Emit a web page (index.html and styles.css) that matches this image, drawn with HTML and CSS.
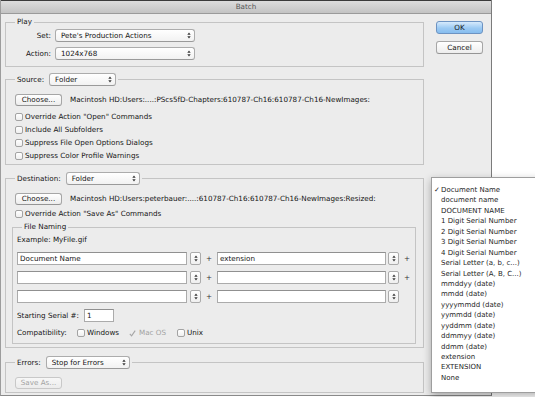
FILE: index.html
```html
<!DOCTYPE html>
<html>
<head>
<meta charset="utf-8">
<title>Batch</title>
<link rel="stylesheet" href="styles.css">
</head>
<body>
<div class="dialog">
  <div class="titlebar">Batch</div>
  <div class="content">
    <div class="main">
      <section class="group play">
        <div class="legend">Play</div>
        <div class="play-row first"><span class="lbl">Set:</span><div class="select w-set"><span>Pete's Production Actions</span><svg class="arr" width="4" height="7" viewBox="0 0 4 7"><path d="M0.3 2.8L2 0.6L3.7 2.8ZM0.3 4.2L2 6.4L3.7 4.2Z"/></svg></div></div>
        <div class="play-row"><span class="lbl">Action:</span><div class="select w-set"><span>1024x768</span><svg class="arr" width="4" height="7" viewBox="0 0 4 7"><path d="M0.3 2.8L2 0.6L3.7 2.8ZM0.3 4.2L2 6.4L3.7 4.2Z"/></svg></div></div>
      </section>

      <section class="group source">
        <div class="legend ctl"><span>Source:</span><div class="select w-src"><span>Folder</span><svg class="arr" width="4" height="7" viewBox="0 0 4 7"><path d="M0.3 2.8L2 0.6L3.7 2.8ZM0.3 4.2L2 6.4L3.7 4.2Z"/></svg></div></div>
        <div class="choose-row"><span class="btn choose">Choose...</span><span class="path">Macintosh HD:Users:....:PScs5fD-Chapters:610787-Ch16:610787-Ch16-NewImages:</span></div>
        <div class="checks">
          <div class="check"><span class="box"></span>Override Action "Open" Commands</div>
          <div class="check"><span class="box"></span>Include All Subfolders</div>
          <div class="check"><span class="box"></span>Suppress File Open Options Dialogs</div>
          <div class="check"><span class="box"></span>Suppress Color Profile Warnings</div>
        </div>
      </section>

      <section class="group dest">
        <div class="legend ctl"><span>Destination:</span><div class="select w-dst"><span>Folder</span><svg class="arr" width="4" height="7" viewBox="0 0 4 7"><path d="M0.3 2.8L2 0.6L3.7 2.8ZM0.3 4.2L2 6.4L3.7 4.2Z"/></svg></div></div>
        <div class="choose-row"><span class="btn choose">Choose...</span><span class="path">Macintosh HD:Users:peterbauer:....:610787-Ch16:610787-Ch16-NewImages:Resized:</span></div>
        <div class="check override"><span class="box"></span>Override Action "Save As" Commands</div>

        <section class="naming">
          <div class="legend">File Naming</div>
          <div class="example">Example: MyFile.gif</div>
          <div class="name-row first">
            <div class="field f1">Document Name</div>
            <span class="stepper"><svg width="4" height="7" viewBox="0 0 4 7"><path d="M0.3 2.8L2 0.6L3.7 2.8ZM0.3 4.2L2 6.4L3.7 4.2Z"/></svg></span>
            <span class="plus">+</span>
            <div class="field f2">extension</div>
            <span class="stepper s2"><svg width="4" height="7" viewBox="0 0 4 7"><path d="M0.3 2.8L2 0.6L3.7 2.8ZM0.3 4.2L2 6.4L3.7 4.2Z"/></svg></span>
            <span class="plus">+</span>
          </div>
          <div class="name-row">
            <div class="field f1"></div>
            <span class="stepper"><svg width="4" height="7" viewBox="0 0 4 7"><path d="M0.3 2.8L2 0.6L3.7 2.8ZM0.3 4.2L2 6.4L3.7 4.2Z"/></svg></span>
            <span class="plus">+</span>
            <div class="field f2"></div>
            <span class="stepper s2"><svg width="4" height="7" viewBox="0 0 4 7"><path d="M0.3 2.8L2 0.6L3.7 2.8ZM0.3 4.2L2 6.4L3.7 4.2Z"/></svg></span>
            <span class="plus">+</span>
          </div>
          <div class="name-row">
            <div class="field f1"></div>
            <span class="stepper"><svg width="4" height="7" viewBox="0 0 4 7"><path d="M0.3 2.8L2 0.6L3.7 2.8ZM0.3 4.2L2 6.4L3.7 4.2Z"/></svg></span>
            <span class="plus">+</span>
            <div class="field f2"></div>
            <span class="stepper s2"><svg width="4" height="7" viewBox="0 0 4 7"><path d="M0.3 2.8L2 0.6L3.7 2.8ZM0.3 4.2L2 6.4L3.7 4.2Z"/></svg></span>
          </div>
          <div class="serial-row">
            <span class="serial-lbl">Starting Serial #:</span>
            <div class="field serial">1</div>
          </div>
          <div class="compat-row">
            <span class="compat-lbl">Compatibility:</span>
            <span class="opt opt-win"><span class="box"></span>Windows</span>
            <span class="opt opt-mac"><svg class="tick" width="7" height="7" viewBox="0 0 7 7"><path d="M0.8 3.8L2.6 5.8L6.2 0.6" fill="none" stroke="#a6a6a6" stroke-width="1.1"/></svg>Mac OS</span>
            <span class="opt"><span class="box"></span>Unix</span>
          </div>
        </section>
      </section>

      <section class="group errors">
        <div class="legend ctl"><span>Errors:</span><div class="select w-err"><span>Stop for Errors</span><svg class="arr" width="4" height="7" viewBox="0 0 4 7"><path d="M0.3 2.8L2 0.6L3.7 2.8ZM0.3 4.2L2 6.4L3.7 4.2Z"/></svg></div></div>
        <span class="btn saveas">Save As...</span>
      </section>
    </div>
    <div class="side">
      <span class="btn primary">OK</span>
      <span class="btn cancel">Cancel</span>
    </div>
  </div>
</div>

<ul class="menu">
  <li><span class="mark">✓</span>Document Name</li>
  <li><span class="mark"></span>document name</li>
  <li><span class="mark"></span>DOCUMENT NAME</li>
  <li><span class="mark"></span>1 Digit Serial Number</li>
  <li><span class="mark"></span>2 Digit Serial Number</li>
  <li><span class="mark"></span>3 Digit Serial Number</li>
  <li><span class="mark"></span>4 Digit Serial Number</li>
  <li><span class="mark"></span>Serial Letter (a, b, c...)</li>
  <li><span class="mark"></span>Serial Letter (A, B, C...)</li>
  <li><span class="mark"></span>mmddyy (date)</li>
  <li><span class="mark"></span>mmdd (date)</li>
  <li><span class="mark"></span>yyyymmdd (date)</li>
  <li><span class="mark"></span>yymmdd (date)</li>
  <li><span class="mark"></span>yyddmm (date)</li>
  <li><span class="mark"></span>ddmmyy (date)</li>
  <li><span class="mark"></span>ddmm (date)</li>
  <li><span class="mark"></span>extension</li>
  <li><span class="mark"></span>EXTENSION</li>
  <li><span class="mark"></span>None</li>
</ul>
</body>
</html>
```

FILE: styles.css
```css
* { box-sizing: border-box; }
html, body { margin: 0; padding: 0; }
body {
  width: 535px;
  height: 397px;
  background: #fff;
  font-family: "DejaVu Sans", "Liberation Sans", sans-serif;
  font-size: 7px;
  line-height: 10px;
  color: #141414;
  position: relative;
  overflow: hidden;
}

.dialog {
  width: 492px;
  height: 396px;
  background: #ececec;
  border-left: 1px solid #9c9c9c;
  border-right: 1px solid #7b7b7b;
  border-bottom: 1px solid #8a8a8a;
  display: flex;
  flex-direction: column;
  font-size: 7.2px;
}

.titlebar {
  height: 14px;
  flex: none;
  border-top: 1px solid #3a3a3a;
  border-bottom: 1px solid #9a9a9a;
  background: linear-gradient(#dcdcdc, #c3c3c3);
  text-align: center;
  line-height: 12px;
  color: #555;
}

.content { display: flex; }
.main { width: 423px; padding-left: 4px; flex: none; }
.side { padding: 7px 0 0 12px; display: flex; flex-direction: column; }

.group {
  border: 1px solid #c4c4c4;
  padding: 0 6px 0 9px;
}
.legend {
  width: max-content;
  height: 10px;
  margin-top: -6px;
  padding: 0 2px;
  background: #ececec;
}
.legend.ctl {
  display: flex;
  align-items: center;
  gap: 5px;
  height: 13px;
  margin-top: -7px;
}

.play { margin-top: 8px; padding-bottom: 6px; }
.play-row { display: flex; align-items: center; height: 13px; margin-top: 5px; }
.play-row.first { margin-top: 2px; }
.lbl { width: 36px; text-align: right; margin-right: 4px; }

.select {
  display: flex;
  align-items: center;
  justify-content: space-between;
  height: 13px;
  border: 1px solid #acacac;
  border-bottom-color: #9a9a9a;
  border-radius: 3px;
  background: linear-gradient(#ffffff, #f2f2f2);
  padding: 0 3px 0 5px;
  line-height: 11px;
  color: #141414;
}
.arr { fill: #3a3a3a; flex: none; }
.w-set { width: 140px; }
.w-src { width: 67px; }
.w-dst { width: 74px; }
.w-err { width: 84px; }

.btn {
  display: inline-block;
  width: 47px;
  height: 12px;
  border: 1px solid #a6a6a6;
  border-bottom-color: #959595;
  border-radius: 3px;
  background: linear-gradient(#ffffff, #ededed);
  text-align: center;
  line-height: 10px;
  color: #141414;
  flex: none;
}
.choose { margin-right: 8px; }
.saveas {
  display: block;
  margin-top: 8px;
  color: #a3a3a3;
  border-color: #c8c8c8;
  background: linear-gradient(#f7f7f7, #ececec);
}
.primary {
  height: 13px;
  line-height: 11px;
  border-color: #6d93c2;
  background: linear-gradient(#d6eafc, #9ccaf3 55%, #86bdef);
}
.cancel { height: 13px; line-height: 11px; margin-top: 7px; }

.choose-row { display: flex; align-items: center; height: 12px; margin-top: 8px; }
.path { white-space: nowrap; }

.source { margin-top: 12px; padding-bottom: 2px; }
.checks { margin-top: 4px; }
.check { display: flex; align-items: center; height: 13px; }
.box {
  display: inline-block;
  flex: none;
  width: 8px;
  height: 8px;
  border: 1px solid #a3a3a3;
  border-radius: 2px;
  background: linear-gradient(#ffffff, #efefef);
  margin-right: 2px;
}

.dest { margin-top: 13px; padding-right: 7px; padding-bottom: 3px; }
.override { margin-top: 2px; }

.naming {
  margin: 7px 0 0 -3px;
  border: 1px solid #c4c4c4;
  padding: 0 0 4px 4px;
}
.naming .legend { margin-left: 5px; }
.example { margin-top: 3px; height: 10px; }

.name-row { display: flex; align-items: center; height: 13px; margin-top: 6px; }
.name-row.first { margin-top: 7px; }
.field {
  height: 13px;
  border: 1px solid #ababab;
  border-top-color: #909090;
  background: #fff;
  padding-left: 2px;
  line-height: 11px;
  flex: none;
}
.f1 { width: 170px; }
.f2 { width: 169px; }
.stepper {
  display: flex;
  align-items: center;
  justify-content: center;
  flex: none;
  width: 11px;
  height: 13px;
  margin-left: 3px;
  border: 1px solid #ababab;
  border-radius: 2px;
  background: linear-gradient(#ffffff, #efefef);
  fill: #3a3a3a;
}
.s2 { margin-left: 2px; }
.plus { width: 16px; text-align: center; flex: none; color: #333; }

.serial-row { display: flex; align-items: center; height: 13px; margin-top: 6px; }
.serial-lbl { width: 67px; }
.serial { width: 30px; }

.compat-row { display: flex; align-items: center; height: 12px; margin-top: 5px; }
.compat-lbl { width: 60px; }
.opt { display: flex; align-items: center; }
.opt-win { width: 52px; }
.opt-mac { width: 48px; color: #a3a3a3; }
.tick { margin-right: 3px; }

.errors { margin-top: 14px; padding-bottom: 3px; }

.menu {
  position: absolute;
  left: 431px;
  top: 177px;
  width: 112px;
  height: 216px;
  margin: 0;
  padding: 7px 0 0 0;
  list-style: none;
  background: #fff;
  border: 1px solid #9e9e9e;
  box-shadow: 0 3px 8px rgba(0, 0, 0, 0.3);
  color: #1e1e1e;
}
.menu li {
  display: flex;
  height: 10.45px;
  line-height: 10.45px;
  padding-left: 2px;
  white-space: nowrap;
}
.mark { display: inline-block; width: 7px; flex: none; }
```
